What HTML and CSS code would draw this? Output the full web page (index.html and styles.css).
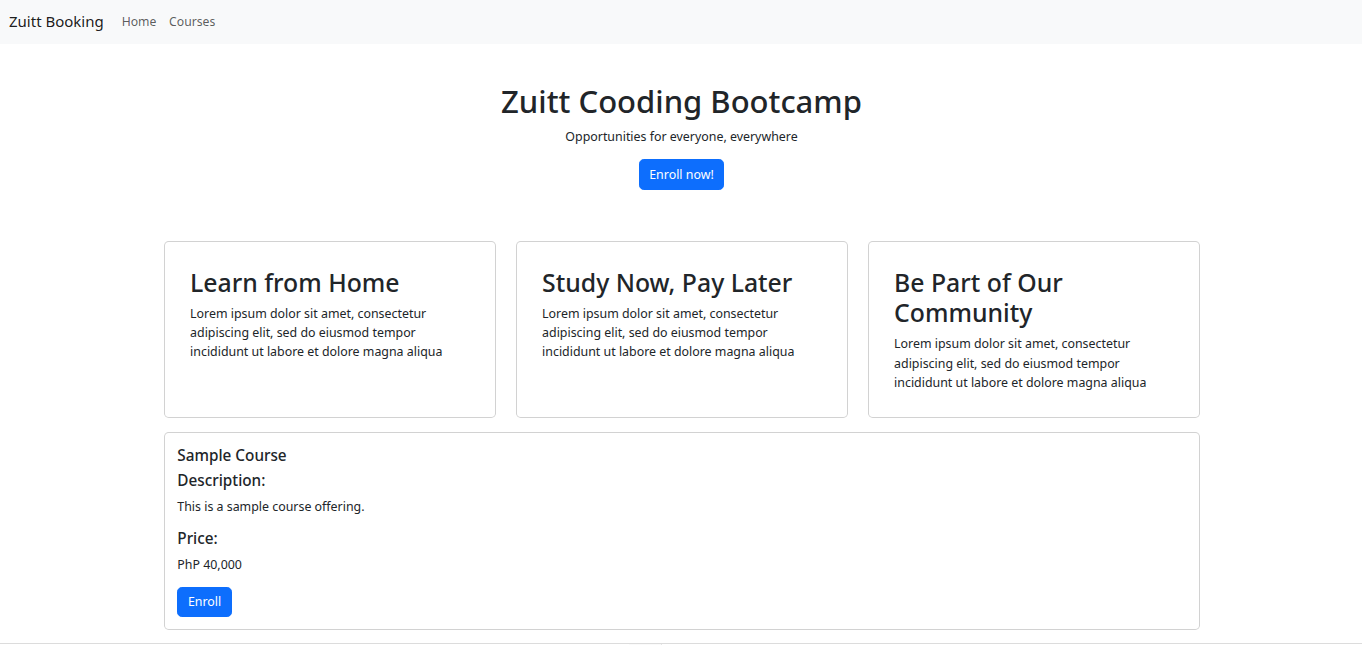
FILE: index.html
```html
<!DOCTYPE html>
<html lang="en">
<head>
<meta charset="utf-8">
<title>Zuitt Booking</title>
<link rel="stylesheet" href="styles.css">
</head>
<body>
<nav class="navbar">
  <a class="brand" href="#">Zuitt Booking</a>
  <a class="nav-link" href="#">Home</a>
  <a class="nav-link" href="#">Courses</a>
</nav>
<main class="container">
  <section class="hero">
    <h1>Zuitt Cooding Bootcamp</h1>
    <p>Opportunities for everyone, everywhere</p>
    <a class="btn" href="#">Enroll now!</a>
  </section>
  <section class="highlights">
    <div class="card highlight">
      <h2>Learn from Home</h2>
      <p>Lorem ipsum dolor sit amet, consectetur adipiscing elit, sed do eiusmod tempor incididunt ut labore et dolore magna aliqua</p>
    </div>
    <div class="card highlight">
      <h2>Study Now, Pay Later</h2>
      <p>Lorem ipsum dolor sit amet, consectetur adipiscing elit, sed do eiusmod tempor incididunt ut labore et dolore magna aliqua</p>
    </div>
    <div class="card highlight">
      <h2>Be Part of Our Community</h2>
      <p>Lorem ipsum dolor sit amet, consectetur adipiscing elit, sed do eiusmod tempor incididunt ut labore et dolore magna aliqua</p>
    </div>
  </section>
  <section class="card course">
    <h5>Sample Course</h5>
    <h5>Description:</h5>
    <p>This is a sample course offering.</p>
    <h5>Price:</h5>
    <p>PhP 40,000</p>
    <a class="btn" href="#">Enroll</a>
  </section>
</main>
<footer class="footer"><span class="footer-tab"></span></footer>
</body>
</html>
```
FILE: styles.css
```css
* { box-sizing: border-box; }
html, body { margin: 0; padding: 0; }
body {
  font-family: "Noto Sans", "Open Sans", sans-serif;
  font-size: 12.4px;
  line-height: 19.2px;
  color: #212529;
  background: #fff;
}
a { text-decoration: none; }
h1, h2, h5, p { margin: 0; }

.navbar {
  height: 44px;
  background: #f8f9fa;
  display: flex;
  align-items: center;
  padding: 0 9px;
}
.brand {
  font-size: 15px;
  color: rgba(0,0,0,.9);
  margin-right: 11.5px;
}
.nav-link {
  color: rgba(0,0,0,.65);
  padding: 0 6.4px;
  font-size: 12.2px;
}

.container {
  width: 1036px;
  margin: 0 auto;
  padding-left: 1px;
  box-sizing: content-box;
}
.hero {
  padding-top: 38px;
  text-align: center;
}
.hero h1 {
  font-size: 31px;
  font-weight: 500;
  line-height: 38.4px;
  margin-bottom: 6.4px;
}
.hero p { margin-bottom: 12.8px; }

.btn {
  display: inline-block;
  background: #0d6efd;
  color: #fff;
  border: 1px solid #0d6efd;
  border-radius: 4.8px;
  padding: 4.8px 9.6px;
  font-size: 12.4px;
  line-height: 19.2px;
}

.highlights {
  margin-top: 51px;
  display: grid;
  grid-template-columns: repeat(3, 1fr);
  gap: 20px;
}
.card {
  border: 1px solid rgba(0,0,0,.175);
  border-radius: 4.8px;
  background: #fff;
}
.highlight {
  padding: 25px 25.6px;
}
.highlight h2 {
  font-size: 24.8px;
  font-weight: 500;
  line-height: 30.7px;
  margin-bottom: 6.4px;
}

.course {
  margin-top: 14px;
  padding: 12.8px 12.8px 12px;
}
.course h5 {
  font-size: 15.3px;
  font-weight: 500;
  line-height: 19.2px;
  margin-bottom: 6.4px;
}
.course p { margin-bottom: 12.8px; }

.footer {
  margin-top: 13px;
  border-top: 1px solid #dcdcdc;
  display: flex;
  justify-content: center;
  height: 8px;
}
.footer-tab {
  width: 33px;
  height: 8px;
  margin-left: -72px;
  background: #fafafa;
  border-right: 1px solid #e6e6e6;
}
```
